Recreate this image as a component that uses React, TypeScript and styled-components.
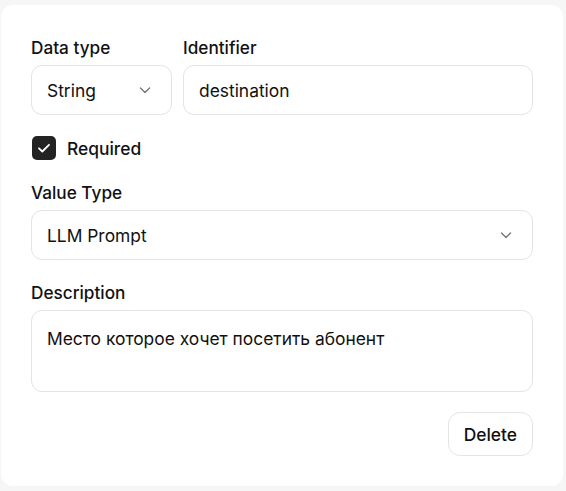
import * as React from 'react';
import styled, { createGlobalStyle } from 'styled-components';

const GlobalStyle = createGlobalStyle`
	html, body {
		margin: 0;
		padding: 0;
		background: #f6f6f6;
	}
	body {
		font-family: Inter, 'Noto Sans', sans-serif;
		color: #111;
	}
	* {
		box-sizing: border-box;
	}
`;

let Page = styled.div`
	padding: 5px 3px 5px 1px;
`;

let Card = styled.div`
	background: #fff;
	border-radius: 12px;
	padding: 33px 30px 30px 30px;
	display: flex;
	flex-direction: column;
	gap: 21px;
`;

let Row = styled.div`
	display: flex;
	gap: 11px;
`;

let Field = styled.div<{ $width?: number; $offset?: number }>`
	display: flex;
	flex-direction: column;
	gap: 7px;
	flex: ${(p) => (p.$width ? `0 0 ${p.$width}px` : '1 1 auto')};
	margin-top: ${(p) => p.$offset || 0}px;
`;

let Label = styled.label`
	font-size: 17.2px;
	font-weight: 500;
	line-height: 20px;
	color: #111;
`;

let Control = styled.div<{ $height?: number }>`
	height: ${(p) => p.$height || 50}px;
	border: 1px solid #e4e4e4;
	border-radius: 11px;
	padding: ${(p) => (p.$height ? '18px 15px' : '2px 15px 0')};
	display: flex;
	align-items: ${(p) => (p.$height ? 'flex-start' : 'center')};
	justify-content: space-between;
	font-size: 17.4px;
	line-height: 20px;
	color: #111;
	background: #fff;
`;

let Chevron = styled.svg`
	width: 16px;
	height: 16px;
	margin: -2px 3px 0 0;
	stroke: #777;
	fill: none;
	stroke-width: 1.4;
`;

let CheckRow = styled.div`
	display: flex;
	align-items: center;
	gap: 11px;
	font-size: 17.4px;
	font-weight: 500;
	margin: 0 0 2px 1px;
`;

let CheckBox = styled.span`
	width: 24px;
	height: 24px;
	border-radius: 5px;
	background: #232323;
	display: flex;
	align-items: center;
	justify-content: center;
`;

let Footer = styled.div`
	display: flex;
	justify-content: flex-end;
	margin-top: -1px;
`;

let DeleteButton = styled.button`
	height: 44px;
	padding: 0 15px;
	border: 1px solid #e4e4e4;
	border-radius: 12px;
	background: #fff;
	font-family: inherit;
	font-size: 17.4px;
	font-weight: 500;
	color: #111;
	cursor: pointer;
`;

const ChevronDown = () => (
	<Chevron viewBox='0 0 16 16'>
		<path d='M3.5 6l4.5 4.5L12.5 6' strokeLinecap='round' strokeLinejoin='round' />
	</Chevron>
);

const App: React.FunctionComponent = () => {
	return (
		<Page>
			<GlobalStyle />
			<Card>
				<Row>
					<Field $width={141}>
						<Label>Data type</Label>
						<Control>
							String
							<ChevronDown />
						</Control>
					</Field>
					<Field>
						<Label>Identifier</Label>
						<Control>destination</Control>
					</Field>
				</Row>
				<CheckRow>
					<CheckBox>
						<svg width='16' height='16' viewBox='0 0 16 16' fill='none'>
							<path
								d='M3 8.3l3.3 3.2L13 4.8'
								stroke='#fff'
								strokeWidth='1.8'
								strokeLinecap='round'
								strokeLinejoin='round'
							/>
						</svg>
					</CheckBox>
					Required
				</CheckRow>
				<Field>
					<Label>Value Type</Label>
					<Control>
						LLM Prompt
						<ChevronDown />
					</Control>
				</Field>
				<Field $offset={2}>
					<Label>Description</Label>
					<Control $height={82}>Место которое хочет посетить абонент</Control>
				</Field>
				<Footer>
					<DeleteButton>Delete</DeleteButton>
				</Footer>
			</Card>
		</Page>
	);
};

export default App;
